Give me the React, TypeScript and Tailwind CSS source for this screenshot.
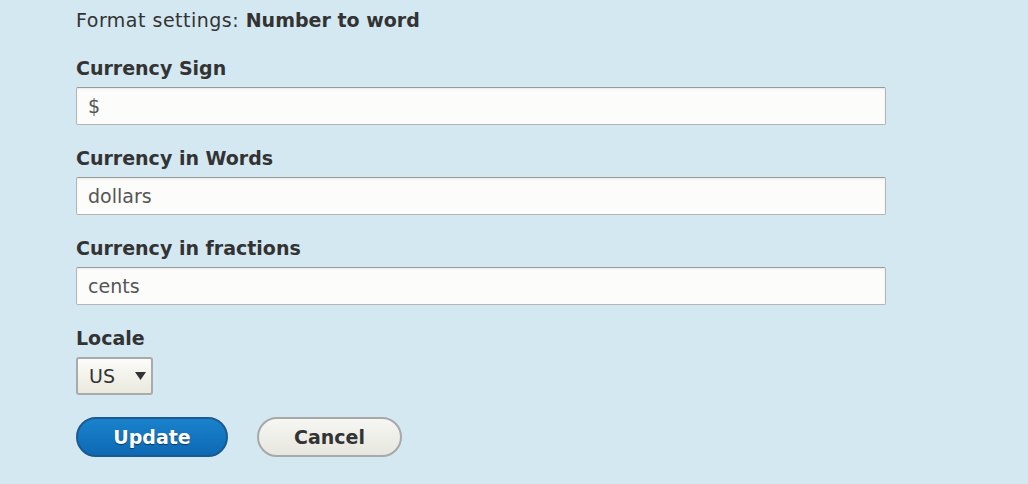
function Field({ label, value }: { label: string; value: string }) {
  return (
    <div className="flex flex-col">
      <label className="font-bold text-[19px] leading-6 text-[#333]">{label}</label>
      <input
        readOnly
        value={value}
        className="mt-[7px] w-[810px] h-[38px] px-[11px] text-[19px] text-[#555] bg-[#fcfcfa] border border-[#b4b4b4] border-t-[#999] rounded-[2px] shadow-[inset_0_1px_2px_rgba(0,0,0,0.08)] outline-none"
      />
    </div>
  );
}

export default function App() {
  return (
    <div
      className="w-[1028px] h-[484px] bg-[#d4e8f2] pl-[76px] pt-2 text-[#333]"
      style={{ fontFamily: '"DejaVu Sans", "Liberation Sans", sans-serif' }}
    >
      <p className="text-[19px] leading-6">
        <span className="tracking-[0.5px]">Format settings: </span>
        <span className="font-bold">Number to word</span>
      </p>
      <div className="mt-6 flex flex-col gap-[21px]">
        <Field label="Currency Sign" value="$" />
        <Field label="Currency in Words" value="dollars" />
        <Field label="Currency in fractions" value="cents" />
        <div className="flex flex-col">
          <label className="font-bold text-[19px] leading-6 text-[#333]">Locale</label>
          <div className="mt-[7px] w-[77px] h-[38px] flex items-center justify-between pl-[11px] pr-[5px] bg-gradient-to-b from-[#fcfcfa] to-[#e9e9dd] border-2 border-[#aaa] rounded-[3px] text-[19px] text-[#333]">
            <span>US</span>
            <svg width="11" height="8" viewBox="0 0 11 8">
              <path d="M0 0 L11 0 L5.5 8 Z" fill="#333" />
            </svg>
          </div>
        </div>
      </div>
      <div className="mt-[22px] flex gap-[29px]">
        <button className="w-[152px] h-[40px] rounded-[20px] bg-gradient-to-b from-[#1a82cc] to-[#0e69b4] border-2 border-[#1b5a90] text-white font-bold text-[19px] [text-shadow:0_1px_1px_rgba(0,0,0,0.5)]">
          Update
        </button>
        <button className="w-[145px] h-[40px] rounded-[20px] bg-gradient-to-b from-[#f6f6f3] to-[#e7e7df] border-2 border-[#a8a8a8] text-[#333] font-bold text-[19px]">
          Cancel
        </button>
      </div>
    </div>
  );
}
